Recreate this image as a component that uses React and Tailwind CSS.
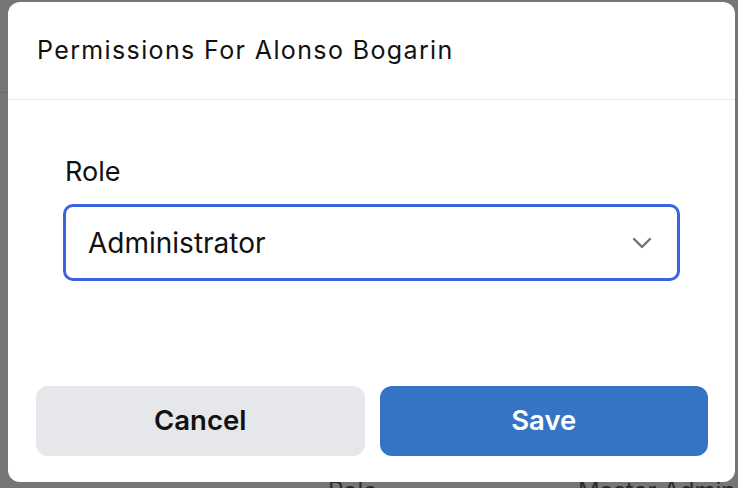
export default function App() {
  return (
    <div
      className="relative w-[738px] h-[488px] overflow-hidden bg-[#767676]"
      style={{ fontFamily: 'Inter, "Noto Sans", sans-serif' }}
    >
      {/* Dimmed page behind the modal */}
      <div className="flex flex-col h-full">
        <div className="h-[93px] border-b border-[#6c6c6c]" />
        <div className="flex-1" />
        <div className="flex h-[12px] pl-[328px] text-[24px] leading-[30px] text-[#2a2a2a]">
          <span className="w-[250px]">Role</span>
          <span>Master Admin</span>
        </div>
      </div>

      {/* Modal */}
      <div className="absolute left-[8px] top-[2px] w-[727px] h-[480px] bg-white rounded-[12px] flex flex-col">
        <div className="h-[98px] flex items-center pl-[29px] border-b border-[#e5e7eb]">
          <h2 className="text-[25px] tracking-[0.055em] text-[#111111]">Permissions For Alonso Bogarin</h2>
        </div>

        <div className="flex-1 flex flex-col pt-[56px] px-[55px]">
          <label className="text-[27px] leading-[32px] text-[#111111] pl-[2px]">Role</label>
          <div className="mt-[16px] h-[77px] border-[3px] border-[#3b63e0] rounded-[10px] flex items-center justify-between pl-[22px] pr-[25px]">
            <span className="text-[28px] text-[#111111]">Administrator</span>
            <svg width="20" height="12" viewBox="0 0 20 12" fill="none" className="text-[#6b7280]">
              <path d="M2 2 L10 10 L18 2" stroke="currentColor" strokeWidth="2.4" strokeLinecap="round" strokeLinejoin="round" />
            </svg>
          </div>
        </div>

        <div className="flex gap-[15px] pl-[28px] pr-[27px] pb-[26px]">
          <button className="flex-1 h-[70px] rounded-[12px] bg-[#e5e7eb] text-[27.5px] font-semibold text-[#111111]">
            Cancel
          </button>
          <button className="flex-1 h-[70px] rounded-[12px] bg-[#3574c4] text-[27.5px] font-semibold text-white">
            Save
          </button>
        </div>
      </div>
    </div>
  );
}
